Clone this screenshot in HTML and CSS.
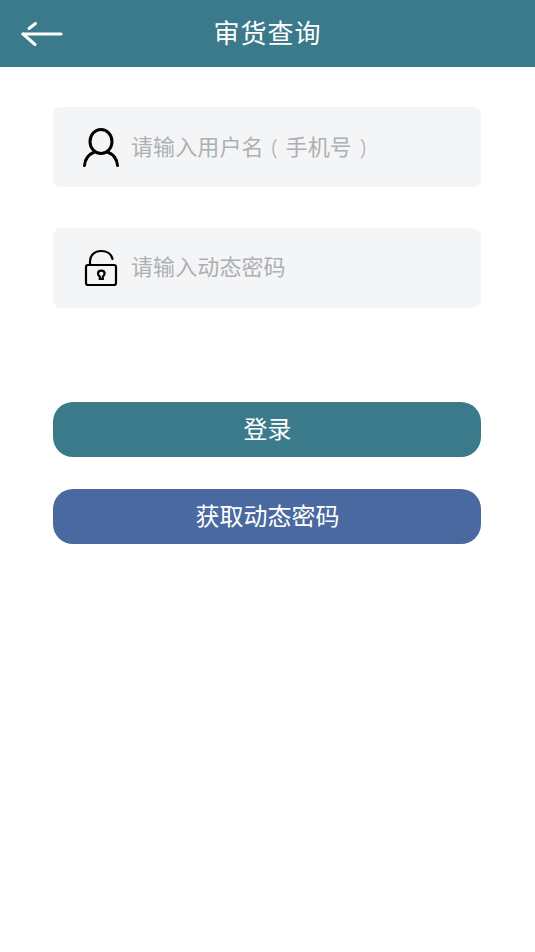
FILE: index.html
```html
<!DOCTYPE html>
<html lang="zh">
<head>
<meta charset="utf-8">
<title>审货查询</title>
<link rel="stylesheet" href="styles.css">
</head>
<body>
<header class="topbar">
  <svg class="back" width="42" height="30" viewBox="0 0 42 30" fill="none" stroke="#fff" stroke-width="3" stroke-linecap="round">
    <path d="M2 15H40"/>
    <path d="M2 15L14 25.500"/>
    <path d="M8 9.500L14.500 4.500"/>
  </svg>
  <h1 class="title">审货查询</h1>
</header>
<main class="form">
  <div class="field">
    <svg class="icon" width="38" height="42" viewBox="0 0 38 42" fill="none" stroke="#000" stroke-width="3" stroke-linecap="round">
      <ellipse cx="19" cy="14.500" rx="11" ry="12"/>
      <path d="M2.500 38.500C3 31.500 7.500 27 12.500 25"/>
      <path d="M35.500 38.500C35 31.500 30.500 27 25.500 25"/>
    </svg>
    <span class="hint">请输入用户名<span class="paren">(</span>手机号<span class="paren">)</span></span>
  </div>
  <div class="field">
    <svg class="icon" width="38" height="42" viewBox="0 0 38 42" fill="none" stroke="#000" stroke-width="2.200" stroke-linecap="round">
      <rect x="4" y="17" width="30" height="20" rx="2"/>
      <path d="M8 17V13C8 7 13 3 19 3C25 3 29.500 6 30.500 11"/>
      <path d="M17.800 28.500C16.500 27.500 16 26.500 16 25.500C16 23.800 17.300 22.700 19.300 22.700C21.300 22.700 22.600 23.800 22.600 25.500C22.600 26.500 22 27.500 20.800 28.500V31H17.800Z"/>
    </svg>
    <span class="hint">请输入动态密码</span>
  </div>
  <button class="btn btn-login" type="button"><span class="btn-label">登录</span></button>
  <button class="btn btn-code" type="button"><span class="btn-label">获取动态密码</span></button>
</main>
</body>
</html>
```
FILE: styles.css
```css
* { box-sizing: border-box; }
html, body { margin: 0; padding: 0; background: #fff; }
body {
  height: 952px;
  font-family: "Noto Sans CJK SC", "Noto Sans", sans-serif;
}
.topbar {
  position: relative;
  height: 67px;
  background: #3a7a8a;
  display: flex;
  align-items: center;
  justify-content: center;
}
.back { position: absolute; left: 21px; top: 19px; }
.title {
  margin: 0 0 4px;
  color: #fff;
  font-size: 26px;
  font-weight: 400;
  letter-spacing: 1px;
  line-height: 63px;
}
.form {
  display: flex;
  flex-direction: column;
  padding: 40px 54px 0 53px;
}
.field {
  height: 80px;
  border-radius: 8px;
  background: #f4f5f7;
  display: flex;
  align-items: center;
  padding-left: 29px;
  margin-bottom: 40.5px;
}
.icon { flex: none; margin-right: 11px; margin-top: 2px; }
.hint {
  color: #aeafb1;
  font-size: 22px;
  line-height: 30px;
  letter-spacing: 0.1px;
  margin-top: -5px;
}
.paren {
  display: inline-block;
  width: 22px;
  font-size: 22px;
  line-height: 20px;
  text-align: center;
  vertical-align: baseline;
  font-family: "Noto Sans", sans-serif;
  font-weight: 300;
}
.btn {
  display: block;
  width: 100%;
  height: 55px;
  border: 0;
  border-radius: 20px;
  color: #fff;
  font-family: inherit;
  font-size: 24px;
  padding: 0 0 5px 1px;
}
.btn-label { display: block; }
.btn-login { background: #3a7a8a; margin-top: 54px; margin-bottom: 32px; }
.btn-code { background: #4a69a0; }
```
